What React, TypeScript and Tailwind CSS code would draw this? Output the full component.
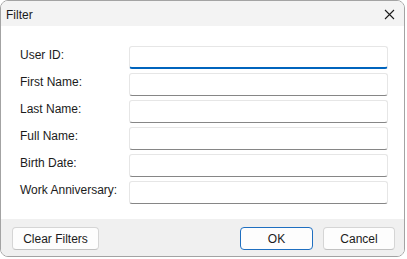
const fields = ['User ID:', 'First Name:', 'Last Name:', 'Full Name:', 'Birth Date:', 'Work Anniversary:'];

function Field({ focused }: { focused?: boolean }) {
  return (
    <div
      className={
        'h-[23px] w-[259px] rounded-[3px] bg-white border border-[#e6e6e6] ' +
        (focused ? 'border-b-2 border-b-[#0064bd]' : 'border-b-[#868686]')
      }
    />
  );
}

export default function App() {
  return (
    <div className="w-[407px] h-[259px] bg-white font-['Segoe_UI','Liberation_Sans',sans-serif] text-[12px] text-[#1b1b1b]">
      <div className="w-[405px] h-[257px] border border-[#a3a3a3] rounded-[8px] overflow-hidden flex flex-col bg-white">
        <div className="h-[25px] shrink-0 bg-[#f3f3f3] flex items-center justify-between pl-[5px] pr-[9px]">
          <span className="leading-[16px] mt-[2px]">Filter</span>
          <svg width="11" height="11" viewBox="0 0 11 11" className="mt-[1px]">
            <path d="M1 1 L10 10 M10 1 L1 10" stroke="#1b1b1b" strokeWidth="1.1" />
          </svg>
        </div>
        <div className="flex-1 pt-[20px] pl-[19px]">
          <div className="grid grid-cols-[109px_259px] gap-y-[4px]">
            {fields.map((label, i) => (
              <div key={label} className="contents">
                <span className="leading-[16px] mt-[1px] whitespace-nowrap">{label}</span>
                <Field focused={i === 0} />
              </div>
            ))}
          </div>
        </div>
        <div className="h-[37px] shrink-0 bg-[#f0f0f0] flex items-start pt-[8px] pl-[11px] pr-[9px]">
          <button className="h-[23px] w-[87px] rounded-[4px] bg-[#fdfdfd] border border-[#d5d5d5] border-b-[#c2c2c2] leading-[16px]">
            Clear Filters
          </button>
          <div className="flex-1" />
          <button className="h-[23px] w-[73px] rounded-[4px] bg-[#fdfdfd] border border-[#1f6fc0] leading-[16px]">
            OK
          </button>
          <button className="h-[23px] w-[72px] ml-[10px] rounded-[4px] bg-[#fdfdfd] border border-[#d5d5d5] border-b-[#c2c2c2] leading-[16px]">
            Cancel
          </button>
        </div>
      </div>
    </div>
  );
}
